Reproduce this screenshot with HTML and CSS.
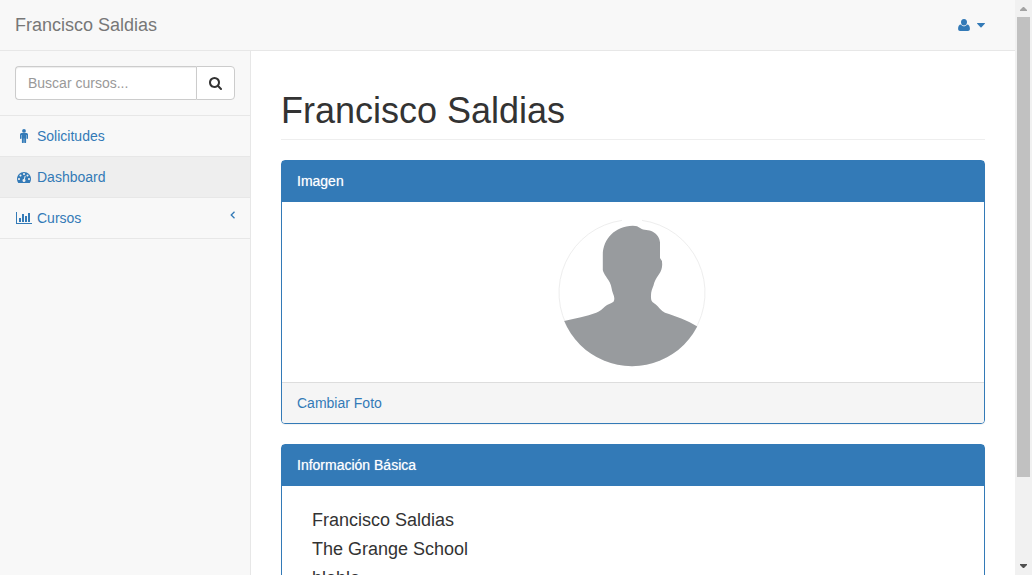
FILE: index.html
```
<!DOCTYPE html>
<html lang="es">
<head>
<meta charset="utf-8">
<meta name="viewport" content="width=device-width, initial-scale=1">
<title>Francisco Saldias</title>
<link rel="stylesheet" href="styles.css">
</head>
<body>
<div class="window">
  <div class="viewport">
    <header class="navbar">
      <a class="brand" href="#">Francisco Saldias</a>
      <button class="user-menu" type="button" aria-label="Menú de usuario">
        <svg class="icon-user" viewBox="0 0 12 12" aria-hidden="true"><path d="M6 0a3.200 3.200 0 0 1 3 3.300C9 5.300 7.700 6.600 6 6.600S3 5.300 3 3.300A3.200 3.200 0 0 1 6 0zM3 5.500C3.800 6.700 4.800 7.300 6 7.300S8.200 6.700 9 5.500C11 5.600 11.900 7.300 11.900 9.800 11.900 11.200 11.100 12 10 12H2C.9 12 .1 11.200.1 9.800.1 7.300 1 5.600 3 5.500z"/></svg>
        <svg class="caret" viewBox="0 0 8 5" aria-hidden="true"><path d="M.5 0h7q.8.2.3.8L4.500 4.200q-.5.4-1 0L.2.8Q-.3.2.5 0z"/></svg>
      </button>
    </header>
    <div class="page">
      <aside class="sidebar">
        <form class="search">
          <input class="search-input" type="text" placeholder="Buscar cursos..." aria-label="Buscar cursos">
          <button class="search-button" type="button" aria-label="Buscar">
            <svg class="icon" viewBox="64 0 1792 1792" aria-hidden="true"><path d="M1216 832q0-185-131.500-316.500t-316.500-131.500-316.500 131.500-131.500 316.500 131.500 316.500 316.500 131.500 316.500-131.500 131.500-316.500zm512 832q0 52-38 90t-90 38q-54 0-90-38l-343-342q-179 124-399 124-143 0-273.500-55.500t-225-150-150-225-55.500-273.500 55.500-273.500 150-225 225-150 273.500-55.500 273.500 55.500 225 150 150 225 55.500 273.500q0 220-124 399l343 343q37 37 37 90z"/></svg>
          </button>
        </form>
        <nav class="menu">
          <a class="menu-link" href="#">
            <svg class="menu-icon" viewBox="0 0 18 14" aria-hidden="true"><circle cx="9" cy="1.900" r="1.900"/><path d="M6.500 4h5Q13 4 13 5.500v3.800a.7.7 0 0 1-1.500 0V6h-.4v7.200a.9.900 0 0 1-1.900 0V9.500h-.4v3.700a.9.900 0 0 1-1.900 0V6h-.4v3.300a.7.7 0 0 1-1.500 0V5.500Q5 4 6.500 4z"/></svg>
            <span class="menu-label">Solicitudes</span>
          </a>
          <a class="menu-link active" href="#">
            <svg class="menu-icon" viewBox="-256 0 2304 1792" aria-hidden="true"><path d="M384 1152q0-53-37.500-90.500t-90.500-37.500-90.500 37.500-37.500 90.500 37.500 90.500 90.500 37.500 90.500-37.500 37.500-90.500zm192-448q0-53-37.500-90.500t-90.500-37.500-90.500 37.500-37.500 90.500 37.500 90.500 90.500 37.500 90.500-37.500 37.500-90.500zm428 481l101-382q6-26-7.500-48.500t-38.500-29.500-48 6.500-30 39.500l-101 382q-60 5-107 43.500t-63 98.500q-20 77 20 146t117 89 146-20 89-117q16-60-6-117t-72-91zm660-33q0-53-37.500-90.500t-90.500-37.500-90.500 37.500-37.500 90.500 37.500 90.500 90.500 37.500 90.500-37.500 37.500-90.500zm-640-640q0-53-37.500-90.500t-90.500-37.500-90.500 37.500-37.500 90.500 37.500 90.500 90.500 37.500 90.500-37.500 37.500-90.500zm448 192q0-53-37.500-90.500t-90.500-37.500-90.500 37.500-37.500 90.500 37.500 90.500 90.500 37.500 90.500-37.500 37.500-90.500zm320 448q0 261-141 483-19 29-54 29h-1402q-35 0-54-29-141-221-141-483 0-182 71-348t191-286 286-191 348-71 348 71 286 191 191 286 71 348z"/></svg>
            <span class="menu-label">Dashboard</span>
          </a>
          <a class="menu-link" href="#">
            <svg class="menu-icon" viewBox="0 0 18 14" aria-hidden="true"><path d="M1 1h1v11h15v1H1zM4 7h2v4H4zM7 3h2v8H7zM10 5h2v6h-2zM13 2h2v9h-2z"/></svg>
            <span class="menu-label">Cursos</span>
            <svg class="arrow" viewBox="0 0 5 8" aria-hidden="true"><path d="M4.500.7 1.200 4l3.300 3.300"/></svg>
          </a>
        </nav>
      </aside>
      <main class="content">
        <h1 class="page-header">Francisco Saldias</h1>
        <section class="panel">
          <div class="panel-heading">Imagen</div>
          <div class="panel-body photo">
            <svg class="avatar" viewBox="0 0 150 150" role="img" aria-label="Foto de perfil">
              <clipPath id="disc"><circle cx="74" cy="75.700" r="73.500"/></clipPath>
              <path class="avatar-ring" d="M84 3.400A73 73 0 1 1 64 3.400"/>
              <path class="avatar-person" clip-path="url(#disc)" d="M74.800 8.700C78.500 8.700 80 9.400 82.500 11.300 85.500 13.600 91 12.700 94.800 14.700 99 16.800 101.800 21 102 25.500V41Q104.200 43 104.200 47.300C104.200 51.500 103.200 54 101 57.300 98 61.500 96.300 65 95.500 68.500 94.300 71.500 92.700 75 93 80 93 84.500 94.500 85 97.500 87.300 100.500 89.700 103 94 107 95.700 117.500 99 129.500 103.500 138.400 109L150 116V150H0V105.500L7.200 103.700C17.500 101 28.500 99.500 38.200 95.700 42 94.200 44.500 92 47 89.500 49.500 87 53 86.500 55.500 84.700 56.800 83 56.500 80 55 76.500 53.500 73 53.700 69 51.800 65.500 50 61.800 45.500 56.800 44.800 53V38C45.100 21.500 57 9.200 74.800 8.700z"/>
            </svg>
          </div>
          <div class="panel-footer"><a href="#">Cambiar Foto</a></div>
        </section>
        <section class="panel">
          <div class="panel-heading">Información Básica</div>
          <div class="panel-body details">
            <h4 class="detail">Francisco Saldias</h4>
            <h4 class="detail">The Grange School</h4>
            <h4 class="detail">blabla</h4>
          </div>
        </section>
      </main>
    </div>
  </div>
  <div class="scrollbar" aria-hidden="true">
    <svg class="scroll-arrow up" viewBox="0 0 17 17"><path d="M5 11h7v-1L9 7H8l-3 3z"/></svg>
    <div class="scroll-track"><div class="scroll-thumb"></div></div>
    <svg class="scroll-arrow" viewBox="0 0 17 17"><path d="M5 6h7v1l-3 3H8L5 7z"/></svg>
  </div>
</div>
</body>
</html>
```
FILE: styles.css
```
* { box-sizing: border-box; }

body {
  margin: 0;
  color: #333;
  background: #fff;
  font: 14px/20px "Liberation Sans", Arial, sans-serif;
}

a { color: #337ab7; text-decoration: none; }

button { font: inherit; cursor: pointer; }

.window {
  display: flex;
  height: 100vh;
  overflow: hidden;
}

.viewport {
  display: flex;
  flex-direction: column;
  flex: 1;
  min-width: 0;
}

.navbar {
  display: flex;
  flex: none;
  align-items: center;
  justify-content: space-between;
  padding: 15px 30px 15px 15px;
  background: #f8f8f8;
  border-bottom: 1px solid #e7e7e7;
}

.brand { color: #777; font-size: 18px; }

.user-menu {
  display: flex;
  align-items: center;
  gap: 7px;
  padding: 0;
  border: 0;
  background: none;
  fill: #337ab7;
}

.icon { display: block; width: 14px; height: 14px; }

.icon-user { display: block; width: 12px; height: 12px; }

.caret { display: block; width: 8px; height: 5px; }

.page {
  display: flex;
  flex: 1;
  min-height: 0;
}

.sidebar {
  flex: none;
  width: 251px;
  background: #f8f8f8;
  border-right: 1px solid #e7e7e7;
}

.search {
  display: flex;
  padding: 15px;
  border-bottom: 1px solid #e7e7e7;
}

.search-input {
  flex: 1;
  min-width: 0;
  height: 34px;
  padding: 6px 12px;
  border: 1px solid #ccc;
  border-right: 0;
  border-radius: 4px 0 0 4px;
  background: #fff;
  box-shadow: inset 0 1px 1px rgba(0, 0, 0, .075);
  color: #555;
  font: inherit;
}

.search-input::placeholder { color: #999; opacity: 1; }

.search-button {
  display: grid;
  place-items: center;
  width: 39px;
  height: 34px;
  padding: 0;
  border: 1px solid #ccc;
  border-radius: 0 4px 4px 0;
  background: #fff;
  fill: #333;
}

.menu-link {
  display: flex;
  align-items: center;
  gap: 4px;
  padding: 10px 15px;
  border-bottom: 1px solid #e7e7e7;
}

.menu-link.active { background: #eee; }

.menu-label { flex: 1; }

.menu-icon { width: 18px; height: 14px; fill: #337ab7; }

.arrow {
  align-self: flex-start;
  width: 5px;
  height: 8px;
  margin-top: 3px;
  fill: none;
  stroke: #337ab7;
  stroke-width: 1.3;
}

.content {
  flex: 1;
  min-width: 0;
  padding: 0 30px;
  overflow: hidden;
}

.page-header {
  margin: 40px 0 20px;
  padding-bottom: 9px;
  border-bottom: 1px solid #eee;
  font-size: 36px;
  font-weight: 500;
  line-height: 39px;
}

.panel {
  margin-bottom: 20px;
  border: 1px solid #337ab7;
  border-radius: 4px;
  box-shadow: 0 1px 1px rgba(0, 0, 0, .05);
}

.panel-heading {
  padding: 10px 15px;
  border-bottom: 1px solid #337ab7;
  background: #337ab7;
  color: #fff;
  text-shadow: 0 0 1px rgba(255, 255, 255, .6);
}

.panel-body { padding: 15px; }

.photo { display: flex; justify-content: center; }

.avatar { display: block; width: 150px; height: 150px; }

.avatar-ring { fill: none; stroke: #eee; }

.avatar-person { fill: #989b9e; }

.panel-footer {
  padding: 10px 15px;
  border-top: 1px solid #ddd;
  border-radius: 0 0 3px 3px;
  background: #f5f5f5;
}

.details { padding: 15px 30px; }

.detail {
  margin: 10px 0;
  font-size: 18px;
  font-weight: 500;
  line-height: 19px;
}

.scrollbar {
  display: flex;
  flex: none;
  flex-direction: column;
  width: 17px;
  background: #f1f1f1;
}

.scroll-arrow { display: block; width: 17px; height: 17px; fill: #505050; }

.scroll-arrow.up { fill: #a3a3a3; }

.scroll-track { flex: 1; padding: 0 2px; }

.scroll-thumb { height: 85%; background: #c1c1c1; }
```
